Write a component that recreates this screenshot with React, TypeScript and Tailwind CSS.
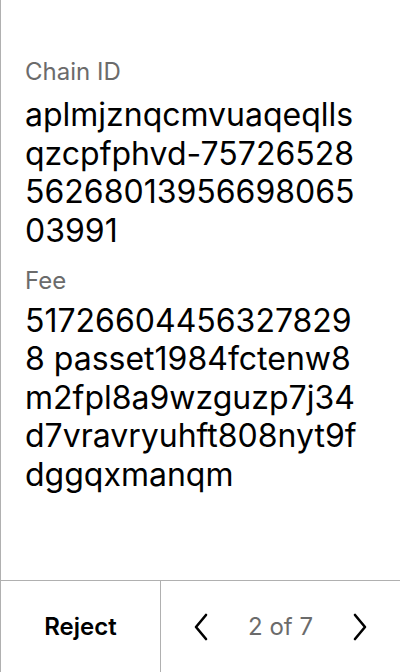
import React from "react";

export default function App() {
  return (
    <div
      className="w-[400px] h-[672px] flex flex-col bg-white border-l border-[#b0b0b0] text-black"
      style={{ fontFamily: "Inter, 'Noto Sans', sans-serif" }}
    >
      <div className="flex-1 pl-6 pr-8 pt-[56px] flex flex-col">
        <div className="text-[24px] leading-8 text-[#6b6b6b]">Chain ID</div>
        <div className="mt-[8px] text-[32px] leading-[38.7px] break-all">
          aplmjznqcmvuaqeqllsqzcpfphvd-7572652856268013956698065 03991
        </div>
        <div className="mt-[14px] text-[24px] leading-8 text-[#6b6b6b]">Fee</div>
        <div className="mt-[5px] text-[32px] leading-[38.5px] break-all">
          517266044563278298 passet1984fctenw8m2fpl8a9wzguzp7j34d7vravryuhft808nyt9fdggqxmanqm
        </div>
      </div>
      <div className="h-[92px] flex border-t border-[#b0b0b0]">
        <div className="w-[160px] flex items-center justify-center border-r border-[#b0b0b0] text-[24px] font-semibold">
          Reject
        </div>
        <div className="flex-1 flex items-center justify-between px-[32px]">
          <svg width="16" height="28" viewBox="0 0 16 28" fill="none">
            <path d="M13 2 L3 14 L13 26" stroke="black" strokeWidth="2.6" strokeLinecap="round" strokeLinejoin="round" />
          </svg>
          <span className="text-[24px] text-[#6b6b6b]">2 of 7</span>
          <svg width="16" height="28" viewBox="0 0 16 28" fill="none">
            <path d="M3 2 L13 14 L3 26" stroke="black" strokeWidth="2.6" strokeLinecap="round" strokeLinejoin="round" />
          </svg>
        </div>
      </div>
    </div>
  );
}
